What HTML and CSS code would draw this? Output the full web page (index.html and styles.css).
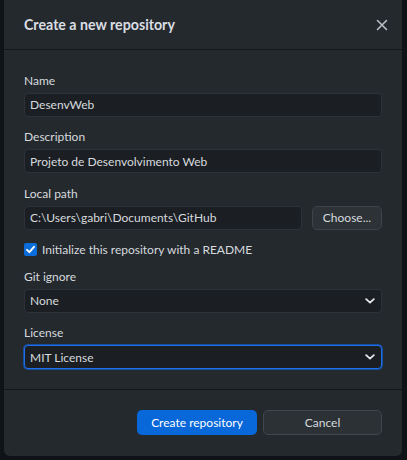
FILE: index.html
```html
<!DOCTYPE html>
<html>
<head>
<meta charset="utf-8">
<link rel="stylesheet" href="styles.css">
</head>
<body>
<div class="dialog">
  <div class="header">
    <h1 class="title">Create a new repository</h1>
    <svg class="close" width="12" height="12" viewBox="0 0 12 12"><path d="M1.5 1.5L10.5 10.5M10.5 1.5L1.5 10.5" stroke="#b9bec4" stroke-width="1.6" stroke-linecap="round"/></svg>
  </div>
  <div class="body">
    <div class="field">
      <div class="label">Name</div>
      <div class="input">DesenvWeb</div>
    </div>
    <div class="field">
      <div class="label">Description</div>
      <div class="input">Projeto de Desenvolvimento Web</div>
    </div>
    <div class="field">
      <div class="label">Local path</div>
      <div class="row">
        <div class="input grow">C:\Users\gabri\Documents\GitHub</div>
        <div class="btn choose">Choose...</div>
      </div>
    </div>
    <div class="check">
      <span class="box"><svg width="11" height="11" viewBox="0 0 11 11"><path d="M2 5.8L4.4 8.2L9 2.8" fill="none" stroke="#fff" stroke-width="1.9" stroke-linecap="round" stroke-linejoin="round"/></svg></span>
      <span>Initialize this repository with a README</span>
    </div>
    <div class="field">
      <div class="label">Git ignore</div>
      <div class="input select">None<svg class="chev" width="10" height="6" viewBox="0 0 10 6"><path d="M1.2 1.2L5 4.6L8.8 1.2" fill="none" stroke="#e6e8eb" stroke-width="1.8" stroke-linecap="round" stroke-linejoin="round"/></svg></div>
    </div>
    <div class="field last">
      <div class="label">License</div>
      <div class="input select focus">MIT License<svg class="chev" width="10" height="6" viewBox="0 0 10 6"><path d="M1.2 1.2L5 4.6L8.8 1.2" fill="none" stroke="#e6e8eb" stroke-width="1.8" stroke-linecap="round" stroke-linejoin="round"/></svg></div>
    </div>
  </div>
  <div class="footer">
    <div class="btn primary">Create repository</div>
    <div class="btn cancel">Cancel</div>
  </div>
</div>
</body>
</html>
```
FILE: styles.css
```css
html, body {
  margin: 0;
  padding: 0;
  background: #0f1216;
  width: 407px;
  height: 460px;
  overflow: hidden;
}
body {
  font-family: Lato, "Noto Sans", sans-serif;
  font-size: 12px;
  color: #d6dade;
}
.dialog {
  margin-left: 4px;
  width: 398px;
  height: 456px;
  background: #24292e;
  border-radius: 0 0 6px 6px;
  display: flex;
  flex-direction: column;
  box-sizing: border-box;
}
.header {
  height: 49px;
  border-bottom: 1px solid #14171a;
  display: flex;
  align-items: center;
  justify-content: space-between;
  padding: 0 14px 0 20px;
  flex-shrink: 0;
}
.title {
  margin: 0;
  font-size: 14.2px;
  font-weight: 700;
  color: #dadee2;
}
.close { display: block; }
.body {
  padding: 22.5px 20px 20px 20px;
  border-bottom: 1px solid #14171a;
  display: flex;
  flex-direction: column;
  gap: 12.3px;
}
.field {
  display: flex;
  flex-direction: column;
  gap: 4px;
}
.label {
  line-height: 16px;
  color: #d6dade;
}
.input {
  height: 24.3px;
  box-sizing: border-box;
  background: #1b1f23;
  border: 1px solid #2d3238;
  border-radius: 4px;
  padding: 0 5px;
  display: flex;
  align-items: center;
  color: #d6dade;
}
.row {
  display: flex;
  gap: 10px;
}
.grow { flex: 1; }
.btn {
  height: 25px;
  box-sizing: border-box;
  border-radius: 5px;
  display: flex;
  align-items: center;
  justify-content: center;
}
.choose {
  width: 70px;
  height: 24.3px;
  background: #2d3237;
  border: 1px solid #3d434a;
  color: #d6dade;
}
.check {
  display: flex;
  align-items: center;
  gap: 5px;
  height: 14px;
}
.box {
  width: 13px;
  height: 13px;
  background: #0a6ddb;
  border-radius: 2px;
  display: flex;
  align-items: center;
  justify-content: center;
}
.box svg { display: block; }
.select {
  justify-content: space-between;
  padding-right: 6px;
}
.chev { display: block; }
.focus {
  border-color: #1f6feb;
  box-shadow: 0 0 0 1px #174f9e;
}
.footer {
  flex: 1;
  display: flex;
  justify-content: flex-end;
  gap: 6px;
  padding: 20px 20px 0 0;
}
.primary {
  width: 120px;
  background: #0867d9;
  color: #ffffff;
}
.cancel {
  width: 119px;
  background: #2c3136;
  border: 1px solid #40464d;
  color: #d6dade;
}
```
